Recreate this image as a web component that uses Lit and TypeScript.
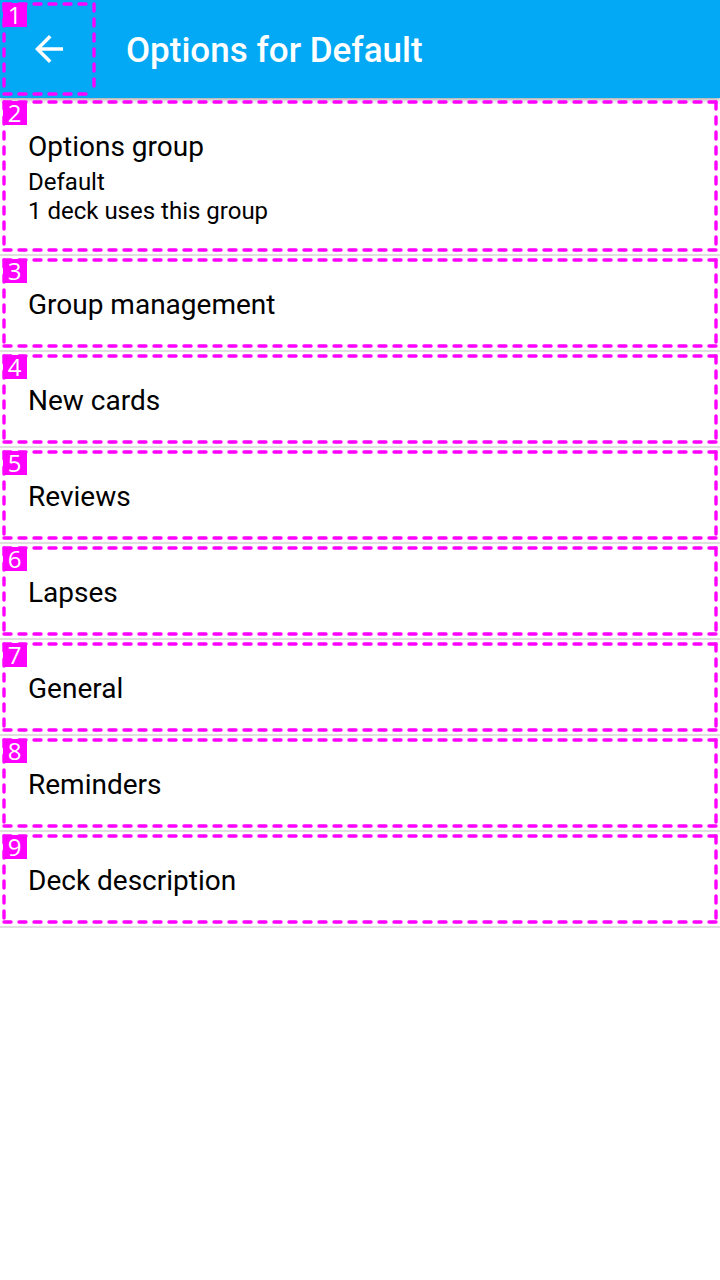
import { LitElement, html, css, svg } from "lit";
import { customElement, property } from "lit/decorators.js";

@customElement("tap-outline")
class TapOutline extends LitElement {
  @property({ type: Number }) index = 0;

  static styles = css`
    :host {
      position: absolute;
      inset: 4px;
      pointer-events: none;
    }
    svg {
      display: block;
      width: 100%;
      height: 100%;
      overflow: visible;
    }
    line {
      stroke: #ff00ff;
      stroke-width: 3.4;
      stroke-linecap: round;
      stroke-dasharray: 7 8;
    }
    .badge {
      position: absolute;
      top: -1px;
      left: -1px;
      box-sizing: border-box;
      width: 24px;
      height: 24px;
      padding-right: 1px;
      background: #ff00ff;
      color: #fff;
      font: 400 24px/24px "Open Sans", sans-serif;
      text-align: center;
    }
  `;

  render() {
    return html`
      <svg aria-hidden="true">
        ${svg`
          <line x1="0" y1="0" x2="100%" y2="0" />
          <line x1="0" y1="100%" x2="100%" y2="100%" />
          <line x1="0" y1="0" x2="0" y2="100%" />
          <line x1="100%" y1="0" x2="100%" y2="100%" />
        `}
      </svg>
      <span class="badge">${this.index}</span>
    `;
  }
}

interface Preference {
  title: string;
  summary?: string[];
}

const preferences: Preference[] = [
  { title: "Options group", summary: ["Default", "1 deck uses this group"] },
  { title: "Group management" },
  { title: "New cards" },
  { title: "Reviews" },
  { title: "Lapses" },
  { title: "General" },
  { title: "Reminders" },
  { title: "Deck description" },
];

@customElement("app-root")
class AppRoot extends LitElement {
  static styles = css`
    :host {
      display: block;
      min-height: 100vh;
      background: #fff;
      color: #000;
      font-family: Roboto, sans-serif;
    }
    .bar {
      display: flex;
      align-items: center;
      gap: 28px;
      height: 98px;
      background: #03a9f4;
      color: #fff;
      box-shadow: 0 1px 5px rgba(0, 0, 0, 0.45);
    }
    button {
      appearance: none;
      border: 0;
      margin: 0;
      background: none;
      color: inherit;
      font: inherit;
      text-align: left;
      cursor: pointer;
    }
    .back {
      position: relative;
      display: grid;
      place-items: center;
      width: 98px;
      height: 98px;
      padding: 0;
    }
    .arrow {
      width: 42px;
      height: 42px;
      fill: currentColor;
    }
    h1 {
      margin: 0;
      padding-top: 4px;
      font-size: 35px;
      line-height: 40px;
      font-weight: 500;
    }
    ul {
      margin: 0;
      padding: 0;
      list-style: none;
    }
    li {
      border-bottom: 2px solid #dedede;
    }
    .row {
      position: relative;
      display: flex;
      flex-direction: column;
      width: 100%;
      padding: 30px 28px 26px;
    }
    .title {
      font-size: 28px;
      line-height: 38px;
    }
    .summary {
      display: flex;
      flex-direction: column;
      padding: 2px 0;
      font-size: 24px;
      line-height: 29px;
    }
  `;

  render() {
    return html`
      <header class="bar">
        <button class="back" aria-label="Navigate up">
          <svg class="arrow" viewBox="0 0 24 24" aria-hidden="true">
            <path d="M20 11H7.83l5.59-5.59L12 4l-8 8 8 8 1.41-1.41L7.83 13H20z" />
          </svg>
          <tap-outline .index=${1}></tap-outline>
        </button>
        <h1>Options for Default</h1>
      </header>
      <ul>
        ${preferences.map(
          (p, i) => html`
            <li>
              <button class="row">
                <span class="title">${p.title}</span>
                ${p.summary
                  ? html`<span class="summary">${p.summary.map((s) => html`<span>${s}</span>`)}</span>`
                  : null}
                <tap-outline .index=${i + 2}></tap-outline>
              </button>
            </li>
          `
        )}
      </ul>
    `;
  }
}
